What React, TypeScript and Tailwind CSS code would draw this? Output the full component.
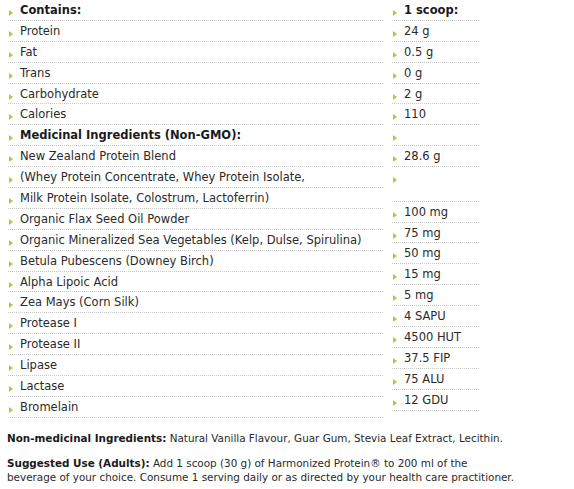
const left: { label: string; bold?: boolean }[] = [
  { label: "Contains:", bold: true },
  { label: "Protein" },
  { label: "Fat" },
  { label: "Trans" },
  { label: "Carbohydrate" },
  { label: "Calories" },
  { label: "Medicinal Ingredients (Non-GMO):", bold: true },
  { label: "New Zealand Protein Blend" },
  { label: "(Whey Protein Concentrate, Whey Protein Isolate," },
  { label: "Milk Protein Isolate, Colostrum, Lactoferrin)" },
  { label: "Organic Flax Seed Oil Powder" },
  { label: "Organic Mineralized Sea Vegetables (Kelp, Dulse, Spirulina)" },
  { label: "Betula Pubescens (Downey Birch)" },
  { label: "Alpha Lipoic Acid" },
  { label: "Zea Mays (Corn Silk)" },
  { label: "Protease I" },
  { label: "Protease II" },
  { label: "Lipase" },
  { label: "Lactase" },
  { label: "Bromelain" },
]

const right: { label: string; bold?: boolean; tall?: boolean }[] = [
  { label: "1 scoop:", bold: true },
  { label: "24 g" },
  { label: "0.5 g" },
  { label: "0 g" },
  { label: "2 g" },
  { label: "110" },
  { label: "" },
  { label: "28.6 g" },
  { label: "", tall: true },
  { label: "100 mg" },
  { label: "75 mg" },
  { label: "50 mg" },
  { label: "15 mg" },
  { label: "5 mg" },
  { label: "4 SAPU" },
  { label: "4500 HUT" },
  { label: "37.5 FIP" },
  { label: "75 ALU" },
  { label: "12 GDU" },
]

function Arrow() {
  return (
    <svg width="4" height="6" viewBox="0 0 4 6" className="mt-[7px] ml-[1px] shrink-0">
      <polygon points="0,0 4,3 0,6" fill="#a9cc3c" />
    </svg>
  )
}

function Row({ label, bold, tall }: { label: string; bold?: boolean; tall?: boolean }) {
  return (
    <li
      className={`flex items-start border-b border-dotted border-[#c8c8c8] pt-[3px] ${
        tall ? "h-[34.5px]" : "h-[20.9px]"
      }`}
    >
      <Arrow />
      <span className={`ml-[7px] whitespace-nowrap leading-[14px] ${bold ? "font-bold text-[#1a1a1a]" : ""}`}>
        {label}
      </span>
    </li>
  )
}

export default function App() {
  return (
    <div className="min-h-[489px] w-[574px] bg-white text-[#2a2a2a] [font-family:'DejaVu_Sans',Verdana,sans-serif]">
      {/* Nutrition lists */}
      <div className="flex gap-[9px] px-[8px] text-[11.5px]">
        <ul className="w-[375px]">
          {left.map((r, i) => (
            <Row key={i} {...r} />
          ))}
        </ul>
        <ul className="w-[87px]">
          {right.map((r, i) => (
            <Row key={i} {...r} />
          ))}
        </ul>
      </div>

      {/* Notes */}
      <div className="px-[7px] pt-[13px] text-[10.4px] leading-[14px] whitespace-nowrap">
        <p>
          <b className="text-[#1a1a1a]">Non-medicinal Ingredients:</b> Natural Vanilla Flavour, Guar Gum, Stevia Leaf
          Extract, Lecithin.
        </p>
        <p className="mt-[11px]">
          <b className="text-[#1a1a1a]">Suggested Use (Adults):</b> Add 1 scoop (30 g) of Harmonized Protein® to 200 ml
          of the
          <br />
          beverage of your choice. Consume 1 serving daily or as directed by your health care practitioner.
        </p>
      </div>
    </div>
  )
}
